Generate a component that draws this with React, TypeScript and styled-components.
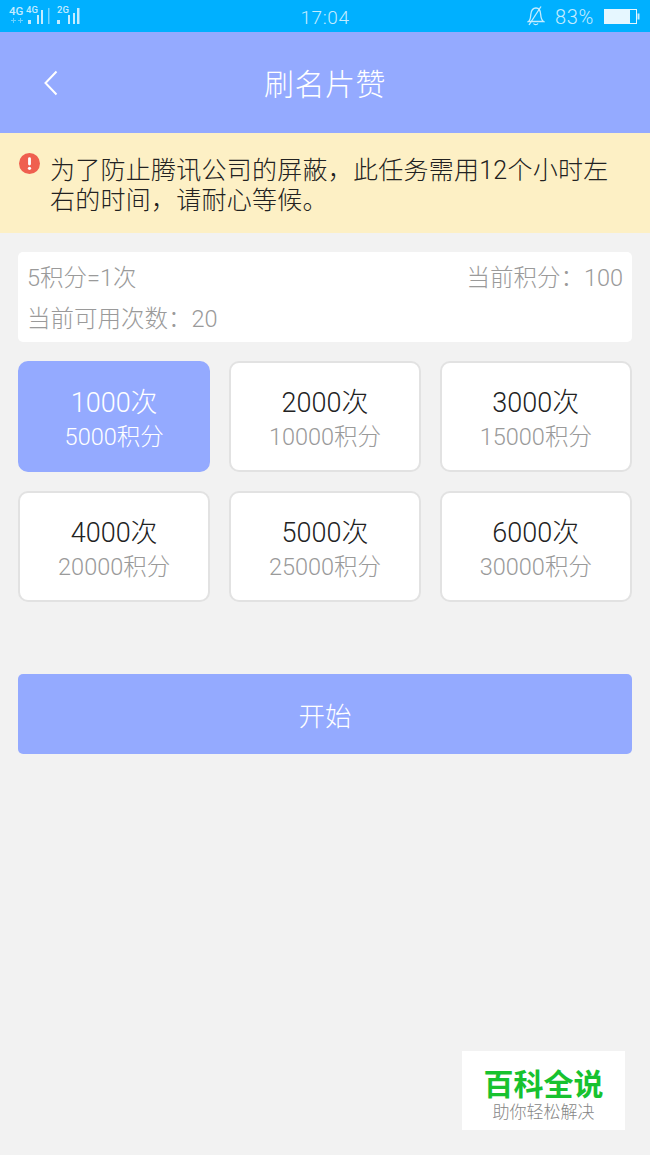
import React, { useState } from 'react';
import styled, { createGlobalStyle } from 'styled-components';

const FONT = `Roboto, "Noto Sans CJK SC", "Liberation Sans", sans-serif`;

const plans = [
  { times: 1000, points: 5000 },
  { times: 2000, points: 10000 },
  { times: 3000, points: 15000 },
  { times: 4000, points: 20000 },
  { times: 5000, points: 25000 },
  { times: 6000, points: 30000 },
];

const GlobalStyle = createGlobalStyle`
  html, body {
    margin: 0;
    padding: 0;
    background: #f2f2f2;
    font-family: ${FONT};
  }
`;

const Page = styled.div`
  position: relative;
  width: 650px;
  height: 1155px;
  overflow: hidden;
  background: #f2f2f2;
`;

const StatusBar = styled.div`
  height: 32px;
  display: grid;
  grid-template-columns: 1fr auto 1fr;
  align-items: center;
  background: #00b0ff;
  color: #c4ecff;
`;

const Signals = styled.div`
  display: flex;
  align-items: center;
  padding-left: 9px;
`;

const Clock = styled.div`
  font-size: 19px;
  font-weight: 300;
  letter-spacing: 0.6px;
  margin-top: 2px;
`;

const StatusRight = styled.div`
  display: flex;
  align-items: center;
  justify-content: flex-end;
  padding-right: 10px;
  gap: 10px;
`;

const Percent = styled.span`
  font-size: 20px;
  font-weight: 300;
  letter-spacing: 0.7px;
  margin-top: 1px;
`;

const Header = styled.header`
  position: relative;
  height: 101px;
  box-sizing: border-box;
  padding-top: 5px;
  display: flex;
  align-items: center;
  justify-content: center;
  background: #94aaff;
  color: #fff;
  font-size: 30px;
  font-weight: 300;
  letter-spacing: 0.5px;
  line-height: 1;
`;

const Back = styled.svg`
  position: absolute;
  left: 43px;
  top: 38px;
`;

const Notice = styled.div`
  height: 100px;
  box-sizing: border-box;
  display: flex;
  align-items: flex-start;
  gap: 10px;
  padding: 20px 30px 0 19px;
  background: #fdf0c5;
  color: #222;
  font-size: 25px;
  line-height: 30px;
`;

const NoticeIcon = styled.svg`
  flex: none;
`;

const NoticeText = styled.div`
  margin-top: 3px;
  font-weight: 300;
  letter-spacing: 0.25px;
`;

const Content = styled.main`
  display: flex;
  flex-direction: column;
  padding: 19px 18px 0;
`;

const InfoCard = styled.section`
  height: 90px;
  box-sizing: border-box;
  display: flex;
  flex-direction: column;
  justify-content: space-between;
  padding: 7px 9px 4px;
  border-radius: 5px;
  background: #fff;
  color: #9a9a9a;
  font-size: 23.500px;
  font-weight: 300;
  line-height: 38px;
`;

const InfoRow = styled.div`
  display: flex;
  justify-content: space-between;
`;

const PlanGrid = styled.div`
  display: grid;
  grid-template-columns: repeat(3, 1fr);
  gap: 19px 18.500px;
  margin-top: 19px;
`;

const Plan = styled.button<{ $active: boolean }>`
  height: 111px;
  box-sizing: border-box;
  padding: 5px 0 0;
  display: flex;
  flex-direction: column;
  align-items: center;
  justify-content: center;
  border: 2px solid ${(p) => (p.$active ? '#94aaff' : '#e2e2e2')};
  border-radius: 10px;
  background: ${(p) => (p.$active ? '#94aaff' : '#fff')};
  font-family: inherit;
  font-weight: 300;
  cursor: pointer;
`;

const Times = styled.span<{ $active: boolean }>`
  font-size: 27px;
  line-height: 36px;
  color: ${(p) => (p.$active ? '#fff' : '#222')};
`;

const Points = styled.span<{ $active: boolean }>`
  font-size: 23.500px;
  line-height: 32px;
  color: ${(p) => (p.$active ? '#fff' : '#9a9a9a')};
`;

const StartButton = styled.button`
  height: 80px;
  margin-top: 72px;
  border: 0;
  border-radius: 5px;
  background: #94aaff;
  color: #fff;
  font-family: inherit;
  font-size: 26.500px;
  font-weight: 300;
  cursor: pointer;
`;

const Watermark = styled.aside`
  position: absolute;
  left: 462px;
  top: 1051px;
  width: 163px;
  height: 79px;
  display: flex;
  flex-direction: column;
  align-items: center;
  padding-top: 18px;
  box-sizing: border-box;
  background: #fff;
`;

const BrandName = styled.div`
  color: #17c22f;
  font-size: 30px;
  font-weight: 700;
  line-height: 32px;
`;

const BrandSlogan = styled.div`
  color: #858585;
  font-size: 17px;
  font-weight: 300;
  line-height: 20px;
  margin-top: 1px;
`;

const SignalIcon = () => (
  <svg width="74" height="26" viewBox="0 0 74 26" fill="#c4ecff">
    <text x="0" y="12" fontSize="11.500" fontFamily="Roboto, sans-serif" fontWeight="500">4G</text>
    <text x="17" y="10" fontSize="9.500" fontFamily="Roboto, sans-serif" fontWeight="500">4G</text>
    <text x="48" y="10" fontSize="9.500" fontFamily="Roboto, sans-serif" fontWeight="500">2G</text>
    <path d="M2 17h5v1H2zM4 15h1v5H4zM9 17h5v1H9zM11 15h1v5h-1z" opacity=".55" />
    <rect x="19" y="17" width="3" height="4" />
    <rect x="28" y="12" width="2" height="9" />
    <rect x="32" y="7" width="2" height="14" />
    <rect x="39" y="5" width="1.500" height="16" opacity=".6" />
    <rect x="48" y="17" width="3" height="4" />
    <rect x="59" y="12" width="2" height="9" />
    <rect x="64" y="10" width="2" height="11" />
    <rect x="68" y="5" width="2.500" height="16" />
  </svg>
);

const BellOffIcon = () => (
  <svg width="18" height="20" viewBox="0 0 18 20" fill="none" stroke="#c4ecff" strokeWidth="1.300">
    <path d="M1.500 15.500c2-1.500 2-4 2.300-7C4.200 4.500 6 2 9 2c3.500 0 4.500 3 4.700 6.500.2 3 .8 5.500 2.800 7z" />
    <path d="M6.500 17.500c1 1.500 3.500 1.500 4.500 0" />
    <path d="M14 .5 2 19" />
  </svg>
);

const BatteryIcon = () => (
  <svg width="36" height="15" viewBox="0 0 36 15">
    <rect x="0.500" y="0.500" width="32" height="14" fill="none" stroke="#e6f7ff" />
    <rect x="1" y="1" width="25" height="13" fill="#e6f7ff" />
    <rect x="33.500" y="4.500" width="2" height="6" fill="#c4ecff" />
  </svg>
);

export default function App() {
  const [selected, setSelected] = useState(1000);

  return (
    <Page>
      <GlobalStyle />
      <StatusBar>
        <Signals>
          <SignalIcon />
        </Signals>
        <Clock>17:04</Clock>
        <StatusRight>
          <BellOffIcon />
          <Percent>83%</Percent>
          <BatteryIcon />
        </StatusRight>
      </StatusBar>
      <Header>
        <Back width="16" height="26" viewBox="0 0 16 26" fill="none" stroke="#fff" strokeWidth="2">
          <path d="M13.500 1.500 2.500 13l11 11.500" />
        </Back>
        刷名片赞
      </Header>
      <Notice>
        <NoticeIcon width="21" height="21" viewBox="0 0 22 22">
          <circle cx="11" cy="11" r="11" fill="#ef5f4f" />
          <rect x="9.500" y="4.500" width="3" height="8.500" rx="1.500" fill="#fff" />
          <circle cx="11" cy="16" r="1.700" fill="#fff" />
        </NoticeIcon>
        <NoticeText>为了防止腾讯公司的屏蔽，此任务需用12个小时左右的时间，请耐心等候。</NoticeText>
      </Notice>
      <Content>
        <InfoCard>
          <InfoRow>
            <span>5积分=1次</span>
            <span>当前积分：100</span>
          </InfoRow>
          <InfoRow>
            <span>当前可用次数：20</span>
          </InfoRow>
        </InfoCard>
        <PlanGrid>
          {plans.map((plan) => (
            <Plan
              key={plan.times}
              $active={plan.times === selected}
              onClick={() => setSelected(plan.times)}
            >
              <Times $active={plan.times === selected}>{plan.times}次</Times>
              <Points $active={plan.times === selected}>{plan.points}积分</Points>
            </Plan>
          ))}
        </PlanGrid>
        <StartButton>开始</StartButton>
      </Content>
      <Watermark>
        <BrandName>百科全说</BrandName>
        <BrandSlogan>助你轻松解决</BrandSlogan>
      </Watermark>
    </Page>
  );
}
